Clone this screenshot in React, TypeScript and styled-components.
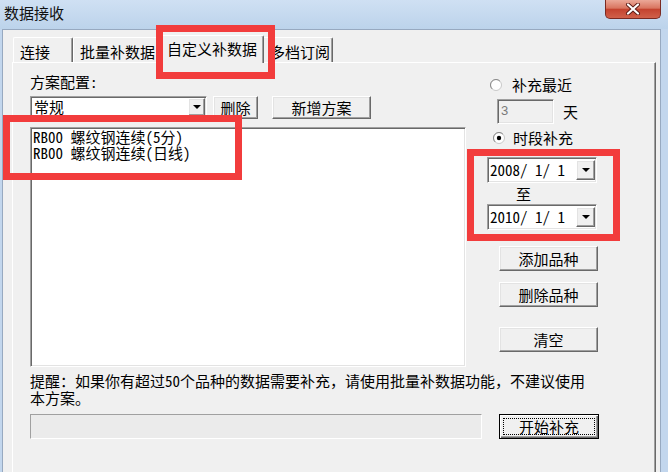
import React from "react";
import styled, { createGlobalStyle, css } from "styled-components";

const UI_FONT = `"Noto Sans Mono CJK SC", "Noto Sans CJK SC", "Liberation Mono", monospace`;

const GlobalStyle = createGlobalStyle`
  html, body {
    margin: 0;
    padding: 0;
    background: #c2d6ed;
    overflow: hidden;
  }
  * { box-sizing: border-box; }
`;

// classic 3D borders
const sunken = css`
  border: 1px solid;
  border-color: #a0a0a0 #ffffff #ffffff #a0a0a0;
  box-shadow: inset 1px 1px 0 #696969, inset -1px -1px 0 #e3e3e3;
`;

const raised = css`
  border: 1px solid;
  border-color: #ffffff #696969 #696969 #ffffff;
  box-shadow: inset -1px -1px 0 #a0a0a0, inset 1px 1px 0 #e3e3e3;
`;

const Window = styled.div`
  position: relative;
  width: 668px;
  height: 472px;
  overflow: hidden;
  display: flex;
  flex-direction: column;
  background: #c2d6ed;
  font-family: ${UI_FONT};
  font-size: 15px;
  color: #000;
`;

const TitleBar = styled.div`
  height: 29px;
  flex-shrink: 0;
  display: flex;
  justify-content: space-between;
  align-items: flex-start;
  background: linear-gradient(#cfe0f3, #bcd3eb);
`;

const Title = styled.div`
  padding: 4px 0 0 4px;
  font-family: "Noto Sans CJK SC", sans-serif;
  font-size: 15px;
  line-height: 17px;
  color: #111;
`;

const CloseButton = styled.div`
  width: 56px;
  height: 19px;
  margin-right: 7px;
  border: 1px solid #7a2a22;
  border-top: none;
  border-radius: 0 0 5px 5px;
  background: linear-gradient(#eba898 0%, #d97560 45%, #c4432f 52%, #d0604a 100%);
  display: flex;
  align-items: center;
  justify-content: center;
`;

const Client = styled.div`
  flex: 1;
  width: 659px;
  margin-left: 2px;
  border: 1px solid #97a9c0;
  border-bottom: none;
  background: #f0f0f0;
  padding-top: 5px;
  display: flex;
  flex-direction: column;
`;

const TabStrip = styled.div`
  position: relative;
  z-index: 1;
  height: 27px;
  padding-left: 10px;
  display: flex;
  align-items: flex-end;
`;

const Tab = styled.div<{ $w: number; $pad: number; $selected?: boolean }>`
  position: relative;
  width: ${(p) => p.$w}px;
  height: 25px;
  padding: 5px 0 0 ${(p) => p.$pad}px;
  line-height: 17px;
  white-space: nowrap;
  background: #f0f0f0;
  border-top: 1px solid #fff;
  border-left: 1px solid #fff;
  border-right: 1px solid #696969;
  box-shadow: inset -1px 0 0 #a0a0a0;
  border-radius: 2px 2px 0 0;
  ${(p) =>
    p.$selected &&
    css`
      z-index: 2;
      height: 28px;
      padding-top: 4px;
      margin: 0 -2px -1px;
    `}
`;

const Panel = styled.div`
  margin-left: 9px;
  width: 644px;
  height: 520px;
  flex-shrink: 0;
  border-top: 1px solid #fff;
  border-left: 1px solid #fff;
  border-right: 1px solid #696969;
  box-shadow: inset -1px 0 0 #a0a0a0;
  padding: 10px 0 0 17px;
`;

const PanelGrid = styled.div`
  display: grid;
  grid-template-columns: 436px auto;
  column-gap: 21px;
  row-gap: 5px;
  align-items: start;
`;

const Column = styled.div`
  display: flex;
  flex-direction: column;
  align-items: flex-start;
`;

const FieldLabel = styled.div`
  line-height: 17px;
`;

const ComboRow = styled.div`
  margin-top: 6px;
  display: flex;
  align-items: flex-start;
`;

const Combo = styled.div`
  ${sunken};
  width: 177px;
  height: 22px;
  background: #fff;
  display: flex;
  align-items: stretch;
  padding: 1px;
`;

const ComboText = styled.span`
  flex: 1;
  padding-left: 2px;
  line-height: 18px;
`;

const ArrowBox = styled.span<{ $w: number }>`
  ${raised};
  width: ${(p) => p.$w}px;
  background: #f0f0f0;
  display: flex;
  align-items: center;
  justify-content: center;
`;

const Button = styled.div<{ $w: number; $h?: number; $ml?: number; $mt?: number }>`
  ${raised};
  width: ${(p) => p.$w}px;
  height: ${(p) => p.$h ?? 23}px;
  margin-left: ${(p) => p.$ml ?? 0}px;
  margin-top: ${(p) => p.$mt ?? 0}px;
  background: #f0f0f0;
  display: flex;
  align-items: center;
  justify-content: center;
  line-height: 17px;
`;

const ListBox = styled.div`
  ${sunken};
  margin-top: 8px;
  width: 436px;
  height: 240px;
  background: #fff;
  padding: 1px 0 0 2px;
`;

const ListItem = styled.div`
  line-height: 16px;
  white-space: pre;
`;

const RadioRow = styled.div<{ $indent: number; $gap: number; $mt: number }>`
  margin-top: ${(p) => p.$mt}px;
  padding-left: ${(p) => p.$indent}px;
  display: flex;
  align-items: center;
  gap: ${(p) => p.$gap}px;
  line-height: 17px;
`;

const DaysRow = styled.div`
  margin-top: 6px;
  padding-left: 10px;
  display: flex;
  align-items: center;
  gap: 9px;
  line-height: 17px;
`;

const DaysInput = styled.div`
  ${sunken};
  width: 57px;
  height: 25px;
  background: #f0f0f0;
  color: #7a7a7a;
  font-family: "Liberation Sans", sans-serif;
  font-size: 13px;
  line-height: 21px;
  padding-left: 3px;
`;

const DatePicker = styled.div<{ $mt: number }>`
  ${sunken};
  margin-top: ${(p) => p.$mt}px;
  width: 110px;
  height: 26px;
  background: #fff;
  display: flex;
  align-items: stretch;
  padding: 2px 1px 2px 2px;
`;

const DateText = styled.span`
  flex: 1;
  white-space: pre;
  line-height: 20px;
`;

const ToLabel = styled.div`
  margin-top: 2px;
  padding-left: 29px;
  line-height: 17px;
`;

const Footer = styled.div`
  grid-column: 1 / -1;
  display: flex;
  flex-direction: column;
`;

const Reminder = styled.div`
  width: 562px;
  line-height: 17px;
`;

const ProgressRow = styled.div`
  margin-top: 8px;
  display: flex;
  align-items: center;
`;

const ProgressBar = styled.div`
  width: 452px;
  height: 25px;
  border: 1px solid;
  border-color: #a0a0a0 #ffffff #ffffff #a0a0a0;
  background: #ebebeb;
`;

const DefaultButton = styled.div`
  width: 100px;
  height: 25px;
  margin-left: 17px;
  border: 1px solid #000;
  box-shadow: inset 1px 1px 0 #fff, inset -1px -1px 0 #696969, inset -2px -2px 0 #a0a0a0;
  background: #f0f0f0;
  padding: 3px;
  display: flex;
`;

const FocusRect = styled.div`
  flex: 1;
  border: 1px dotted #000;
  display: flex;
  align-items: center;
  justify-content: center;
  line-height: 17px;
`;

const Highlight = styled.div<{ $x: number; $y: number; $w: number; $h: number }>`
  position: absolute;
  left: ${(p) => p.$x}px;
  top: ${(p) => p.$y}px;
  width: ${(p) => p.$w}px;
  height: ${(p) => p.$h}px;
  border: 7px solid #f23c3c;
  pointer-events: none;
  z-index: 5;
`;

const DownArrow = () => (
  <svg width="8" height="4" viewBox="0 0 8 4">
    <path d="M0 0h8L4 4z" fill="#000" />
  </svg>
);

const Radio = ({ checked }: { checked?: boolean }) => (
  <svg width="12" height="12" viewBox="0 0 12 12">
    <circle cx="6" cy="6" r="5.5" fill="#fff" stroke="#c8c8c8" />
    <path d="M2.1 9.9A5.5 5.5 0 0 1 9.9 2.1" fill="none" stroke="#8a8a8a" />
    {checked && <circle cx="6" cy="6" r="2.2" fill="#000" />}
  </svg>
);

const CloseGlyph = () => (
  <svg width="16" height="12" viewBox="0 0 16 12">
    <path d="M3 1.5L13 10.5M13 1.5L3 10.5" stroke="#5a1a14" strokeWidth="4" strokeLinecap="round" />
    <path d="M3 1.5L13 10.5M13 1.5L3 10.5" stroke="#fff" strokeWidth="2.2" strokeLinecap="round" />
  </svg>
);

const tabs = [
  { label: "连接", w: 60, pad: 6 },
  { label: "批量补数据", w: 86, pad: 6 },
  { label: "自定义补数据", w: 107, pad: 9, selected: true },
  { label: "多档订阅", w: 71, pad: 7 },
];

const items = ["RB00 螺纹钢连续(5分)", "RB00 螺纹钢连续(日线)"];

export default function App() {
  return (
    <>
      <GlobalStyle />
      <Window>
        <TitleBar>
          <Title>数据接收</Title>
          <CloseButton>
            <CloseGlyph />
          </CloseButton>
        </TitleBar>
        <Client>
          <TabStrip>
            {tabs.map((t) => (
              <Tab key={t.label} $w={t.w} $pad={t.pad} $selected={t.selected}>
                {t.label}
              </Tab>
            ))}
          </TabStrip>
          <Panel>
            <PanelGrid>
              <Column>
                <FieldLabel>方案配置:</FieldLabel>
                <ComboRow>
                  <Combo>
                    <ComboText>常规</ComboText>
                    <ArrowBox $w={17}>
                      <DownArrow />
                    </ArrowBox>
                  </Combo>
                  <Button $w={45} $ml={6}>删除</Button>
                  <Button $w={99} $ml={14}>新增方案</Button>
                </ComboRow>
                <ListBox>
                  {items.map((it) => (
                    <ListItem key={it}>{it}</ListItem>
                  ))}
                </ListBox>
              </Column>
              <Column>
                <RadioRow $mt={3} $indent={3} $gap={10}>
                  <Radio />
                  <span>补充最近</span>
                </RadioRow>
                <DaysRow>
                  <DaysInput>3</DaysInput>
                  <span>天</span>
                </DaysRow>
                <RadioRow $mt={5} $indent={6} $gap={8}>
                  <Radio checked />
                  <span>时段补充</span>
                </RadioRow>
                <DatePicker $mt={11}>
                  <DateText>2008/ 1/ 1</DateText>
                  <ArrowBox $w={19}>
                    <DownArrow />
                  </ArrowBox>
                </DatePicker>
                <ToLabel>至</ToLabel>
                <DatePicker $mt={2}>
                  <DateText>2010/ 1/ 1</DateText>
                  <ArrowBox $w={19}>
                    <DownArrow />
                  </ArrowBox>
                </DatePicker>
                <Button $w={99} $h={25} $ml={12} $mt={16}>添加品种</Button>
                <Button $w={99} $h={25} $ml={12} $mt={11}>删除品种</Button>
                <Button $w={99} $h={25} $ml={12} $mt={20}>清空</Button>
              </Column>
              <Footer>
                <Reminder>
                  提醒：如果你有超过50个品种的数据需要补充，请使用批量补数据功能，不建议使用本方案。
                </Reminder>
                <ProgressRow>
                  <ProgressBar />
                  <DefaultButton>
                    <FocusRect>开始补充</FocusRect>
                  </DefaultButton>
                </ProgressRow>
              </Footer>
            </PanelGrid>
          </Panel>
        </Client>
        <Highlight $x={156} $y={25} $w={119} $h={54} />
        <Highlight $x={3} $y={115} $w={239} $h={65} />
        <Highlight $x={467} $y={149} $w={153} $h={92} />
      </Window>
    </>
  );
}
